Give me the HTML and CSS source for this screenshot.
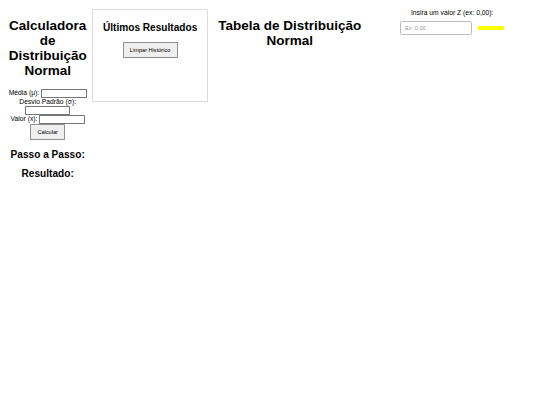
FILE: index.html
```html
<!DOCTYPE html>
<html lang="pt">
<head>
<meta charset="utf-8">
<title>Calculadora de Distribuição Normal</title>
<link rel="stylesheet" href="styles.css">
</head>
<body>
<div class="page">
  <div class="calc">
    <h1 class="title">Calculadora de Distribuição Normal</h1>
    <div class="form">
      <label for="media">Média (μ):</label> <input type="text" id="media" class="num"><br>
      <label for="desvio">Desvio Padrão (σ):</label> <input type="text" id="desvio" class="num"><br>
      <label for="valor">Valor (x):</label> <input type="text" id="valor" class="num"><br>
      <button class="btn">Calcular</button>
    </div>
    <h2 class="sub">Passo a Passo:</h2>
    <div class="steps"></div>
    <h2 class="sub">Resultado:</h2>
    <div class="result"></div>
  </div>
  <div class="history">
    <h2 class="sub">Últimos Resultados</h2>
    <button class="btn">Limpar Histórico</button>
  </div>
  <div class="table">
    <h1 class="title">Tabela de Distribuição Normal</h1>
  </div>
  <div class="zsec">
    <label class="zlabel" for="z">Insira um valor Z (ex: 0,00):</label>
    <input type="text" id="z" class="zinput" placeholder="Ex: 0,00"><span class="zresult"></span>
  </div>
</div>
</body>
</html>
```
FILE: styles.css
```css
html, body {
  margin: 0;
  padding: 0;
  background: #fff;
}
body {
  font-family: "Liberation Sans", Arial, sans-serif;
  color: #000;
}
.page {
  zoom: 0.421875;
  display: flex;
  align-items: flex-start;
  padding: 22px 8px 20px;
  font-size: 16px;
}
.title {
  font-size: 32px;
  margin: 21.44px 0;
}
.sub {
  font-size: 24px;
  margin: 19.92px 0;
}
.calc {
  width: 210px;
  text-align: center;
  flex: none;
}
.form {
  padding-top: 4px;
  line-height: 1.2;
}
.num {
  font-family: "Liberation Sans", Arial, sans-serif;
  font-size: 13.33px;
  padding: 1px 2px;
  border: 1px solid #767676;
  border-radius: 2px;
  box-sizing: border-box;
  height: 21px;
  width: 108px;
}
.btn {
  font-family: "Liberation Sans", Arial, sans-serif;
  font-size: 13.33px;
  padding: 10px 15px;
  background: #efefef;
  border: 1px solid #8f8f8f;
  border-radius: 2px;
  color: #000;
}
.history {
  flex: none;
  width: 251px;
  height: 196px;
  padding: 10px;
  border: 1px solid #dcdcdc;
  text-align: center;
  margin-top: -1px;
}
.table {
  flex: none;
  width: 386px;
  text-align: center;
}
.zsec {
  flex: none;
  width: 384px;
  text-align: center;
}
.zlabel {
  display: block;
  margin-bottom: 10px;
}
.zinput {
  width: 172px;
  height: 34px;
  box-sizing: border-box;
  padding: 8px 10px;
  border: 1px solid #bbb;
  border-radius: 4px;
  font-family: "Liberation Sans", Arial, sans-serif;
  font-size: 13.33px;
}
.zinput::placeholder {
  color: #999;
}
.zresult {
  display: inline-block;
  width: 62px;
  height: 8px;
  margin-left: 14px;
  background: #ffff00;
  vertical-align: middle;
}
```
